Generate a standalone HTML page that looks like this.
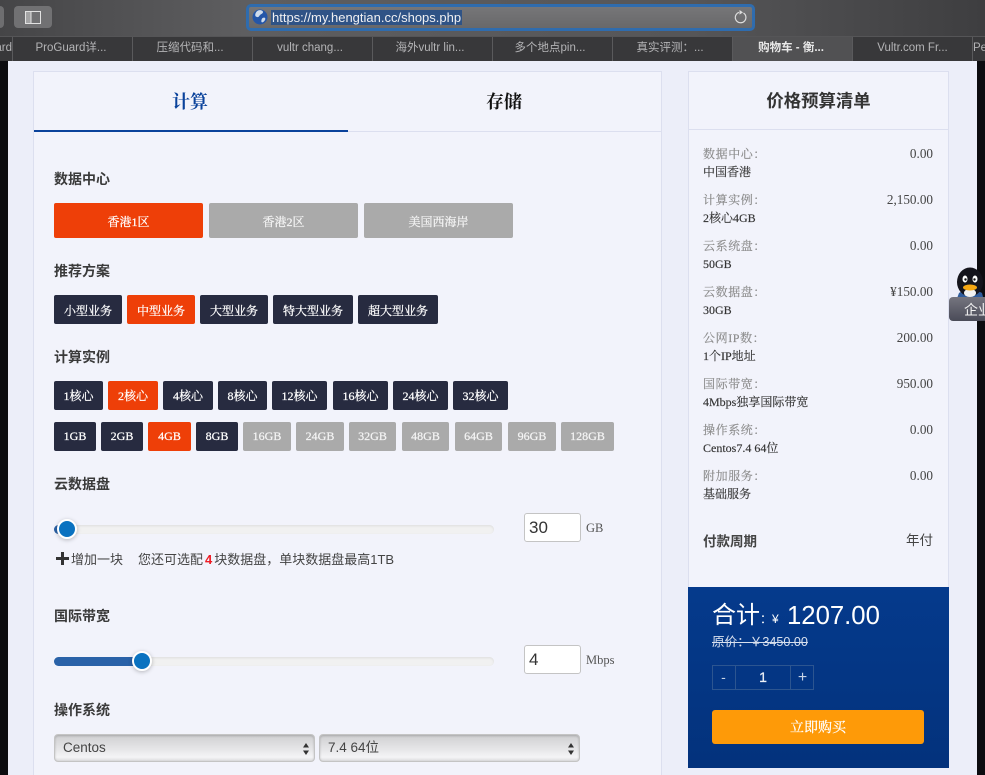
<!DOCTYPE html>
<html><head><meta charset="utf-8">
<style>
*{box-sizing:border-box}
html,body{margin:0;padding:0;width:985px;height:775px;overflow:hidden;background:#0c0c10}
#w{position:relative;width:985px;height:775px;overflow:hidden;background:#0c0c10;font-family:"Liberation Serif","Noto Serif CJK SC",serif;color:#333}
.a{position:absolute;white-space:nowrap}
.b{position:absolute;color:#fff;text-align:center;border-radius:2px;font-size:12px;-webkit-text-stroke:.25px currentColor;font-family:"Liberation Serif","Noto Serif CJK SC",serif}
.d{background:#272b40}.o{background:#ee3f08}.g{background:#aaaaaa;color:#f4f4f4}
.h{position:absolute;left:54px;font:bold 14px/20px "Liberation Sans","Noto Sans CJK SC",sans-serif;color:#3a3a3a}
.tab{position:absolute;top:37px;height:24px;width:120px;border-left:1px solid #5a5a5c;color:#b4b4b6;font:11.5px/23px "Liberation Sans","Noto Sans CJK SC",sans-serif;text-align:center;overflow:hidden;white-space:nowrap;padding-right:5px}
.l{position:absolute;left:703px;font-size:12px;line-height:16px;color:#8a8a8a;letter-spacing:.6px;-webkit-text-stroke:.15px currentColor}
.v{position:absolute;left:703px;font-size:12px;line-height:16px;color:#333;-webkit-text-stroke:.15px currentColor}
.r{position:absolute;right:52px;font-size:13.2px;line-height:16px;color:#444}
.track{position:absolute;left:54px;width:440px;height:9px;border-radius:5px;background:#f1f1f1;box-shadow:inset 0 1px 2px #ddd}
.knob{position:absolute;width:20px;height:20px;border-radius:50%;background:#0a72c0;border:2px solid #fff;box-shadow:0 1px 4px rgba(0,0,0,.25)}
.inp{position:absolute;left:524px;width:57px;height:29px;background:#fff;border:1px solid #c4c4c4;border-radius:3px;font:17px/27px "Liberation Sans",sans-serif;padding-left:4px;color:#333}
.sel{position:absolute;top:734px;height:28px;border:1px solid #c4c4c4;border-radius:4px;background:linear-gradient(#cfcfd1,#e6e6e8 55%,#f4f4f6 85%,#dcdcde);box-shadow:inset 0 1px 2px rgba(0,0,0,.2);font:13.5px/26px "Liberation Sans","Noto Sans CJK SC",sans-serif;color:#444;padding-left:8px}
.sel svg{position:absolute;right:4px;top:7px}
</style></head>
<body>
<div id="w">
<!-- toolbar -->
<div class="a" style="left:0;top:0;width:985px;height:36px;background:linear-gradient(90deg,#454547,#5e5e60 25%,#565658 70%,#3e3e40)"></div>
<div class="a" style="left:-20px;top:6px;width:24px;height:22px;background:#6e6e70;border-radius:4px"></div>
<div class="a" style="left:14px;top:6px;width:38px;height:22px;background:#717173;border-radius:4px"></div>
<svg class="a" style="left:25px;top:11px" width="16" height="13"><rect x=".5" y=".5" width="15" height="12" fill="none" stroke="#e2e2e2"/><line x1="6" y1="1" x2="6" y2="12" stroke="#e2e2e2"/><rect x="1" y="1" width="5" height="11" fill="#e2e2e2" opacity=".45"/></svg>
<div class="a" style="left:246px;top:4px;width:509px;height:27px;background:linear-gradient(#767678,#68686a);border:3px solid #2f6cae;border-radius:5px"></div>
<svg class="a" style="left:252px;top:9px" width="16" height="16"><circle cx="8" cy="8" r="7.5" fill="#2456a8"/><path d="M6 1.500c2-1 5 0 5 1.500s-2 2-3 3-1 2.500-3 2-2-2-1.500-3.500S5 2 6 1.500zM10.500 9c2-1 3.500 0 2.500 2s-3 3-3.500 2 0-3 1-4z" fill="#cfdcec"/></svg>
<div class="a" style="left:271px;top:10px;width:191px;height:15px;background:#2f5386"></div>
<div class="a" style="left:272px;top:9px;font:13px/17px 'Liberation Sans',sans-serif;color:#f0f0f2">https://my.hengtian.cc/shops.php</div>
<svg class="a" style="left:733px;top:9px" width="15" height="16"><path d="M10.5 4A5.3 5.3 0 1 1 6 3.400" fill="none" stroke="#dedede" stroke-width="1.200"/><path d="M6.500 1l3.500 2.400-3.500 2.200z" fill="#dedede"/></svg>
<!-- tabs -->
<div class="a" style="left:0;top:36px;width:985px;height:25px;background:#38383a;border-top:1px solid #555557"></div>
<div class="tab" style="left:-108px;text-align:right;padding-right:0">ard</div>
<div class="tab" style="left:12px;padding-right:3px">ProGuard详...</div>
<div class="tab" style="left:132px">压缩代码和...</div>
<div class="tab" style="left:252px">vultr chang...</div>
<div class="tab" style="left:372px">海外vultr lin...</div>
<div class="tab" style="left:492px">多个地点pin...</div>
<div class="tab" style="left:612px">真实评测：...</div>
<div class="tab" style="left:732px;background:#515153;color:#e8e8e8;font-weight:bold;padding-right:3px">购物车 - 衡...</div>
<div class="tab" style="left:852px;padding-right:0">Vultr.com Fr...</div>
<div class="tab" style="left:972px;text-align:left;padding-right:0">Per</div>
<!-- page -->
<div class="a" style="left:8px;top:61px;width:969px;height:714px;background:#eceef9"></div>
<!-- left panel -->
<div class="a" style="left:33px;top:71px;width:629px;height:704px;background:#f2f3fb;border:1px solid #dcdfef;border-bottom:0"></div>
<div class="a" style="left:34px;top:131px;width:627px;height:1px;background:#dcdfef"></div>
<div class="a" style="left:34px;top:130px;width:314px;height:2px;background:#0a429b"></div>
<div class="a" style="left:172px;top:90px;font-size:18px;line-height:24px;color:#0a429b;font-weight:700">计算</div>
<div class="a" style="left:486px;top:90px;font-size:18px;line-height:24px;color:#111;font-weight:700">存储</div>

<div class="h" style="top:169px">数据中心</div>
<div class="b o" style="left:54px;top:203px;width:149px;height:35px;line-height:39px">香港1区</div>
<div class="b g" style="left:209px;top:203px;width:149px;height:35px;line-height:39px">香港2区</div>
<div class="b g" style="left:364px;top:203px;width:149px;height:35px;line-height:39px">美国西海岸</div>

<div class="h" style="top:261px">推荐方案</div>
<div class="b d" style="left:54px;top:295px;width:68px;height:29px;line-height:33px">小型业务</div>
<div class="b o" style="left:127px;top:295px;width:68px;height:29px;line-height:33px">中型业务</div>
<div class="b d" style="left:200px;top:295px;width:68px;height:29px;line-height:33px">大型业务</div>
<div class="b d" style="left:273px;top:295px;width:80px;height:29px;line-height:33px">特大型业务</div>
<div class="b d" style="left:358px;top:295px;width:80px;height:29px;line-height:33px">超大型业务</div>

<div class="h" style="top:347px">计算实例</div>
<div class="b d" style="left:54px;top:381px;width:49px;height:29px;line-height:31px">1核心</div>
<div class="b o" style="left:108px;top:381px;width:50px;height:29px;line-height:31px">2核心</div>
<div class="b d" style="left:163px;top:381px;width:50px;height:29px;line-height:31px">4核心</div>
<div class="b d" style="left:218px;top:381px;width:49px;height:29px;line-height:31px">8核心</div>
<div class="b d" style="left:272px;top:381px;width:55px;height:29px;line-height:31px">12核心</div>
<div class="b d" style="left:333px;top:381px;width:55px;height:29px;line-height:31px">16核心</div>
<div class="b d" style="left:393px;top:381px;width:55px;height:29px;line-height:31px">24核心</div>
<div class="b d" style="left:453px;top:381px;width:55px;height:29px;line-height:31px">32核心</div>

<div class="b d" style="left:54px;top:422px;width:42px;height:29px;line-height:29px">1GB</div>
<div class="b d" style="left:101px;top:422px;width:42px;height:29px;line-height:29px">2GB</div>
<div class="b o" style="left:148px;top:422px;width:43px;height:29px;line-height:29px">4GB</div>
<div class="b d" style="left:196px;top:422px;width:42px;height:29px;line-height:29px">8GB</div>
<div class="b g" style="left:243px;top:422px;width:48px;height:29px;line-height:29px">16GB</div>
<div class="b g" style="left:296px;top:422px;width:48px;height:29px;line-height:29px">24GB</div>
<div class="b g" style="left:349px;top:422px;width:47px;height:29px;line-height:29px">32GB</div>
<div class="b g" style="left:402px;top:422px;width:47px;height:29px;line-height:29px">48GB</div>
<div class="b g" style="left:455px;top:422px;width:47px;height:29px;line-height:29px">64GB</div>
<div class="b g" style="left:508px;top:422px;width:48px;height:29px;line-height:29px">96GB</div>
<div class="b g" style="left:561px;top:422px;width:53px;height:29px;line-height:29px">128GB</div>

<div class="h" style="top:474px">云数据盘</div>
<div class="track" style="top:525px"></div>
<div class="a" style="left:54px;top:525px;width:12px;height:9px;background:#2a62a8;border-radius:5px 0 0 5px"></div>
<div class="knob" style="left:57px;top:519px"></div>
<div class="inp" style="top:513px">30</div>
<div class="a" style="left:586px;top:520px;font-size:12.500px;line-height:16px;color:#555">GB</div>
<svg class="a" style="left:56px;top:552px" width="13" height="13"><path d="M5 0h3v5h5v3H8v5H5V8H0V5h5z" fill="#333"/></svg>
<div class="a" style="left:71px;top:551px;font:13px/18px 'Liberation Sans','Noto Sans CJK SC',sans-serif;color:#444">增加一块</div>
<div class="a" style="left:138px;top:551px;font:13px/18px 'Liberation Sans','Noto Sans CJK SC',sans-serif;color:#444">您还可选配<span style="color:#ee1c25;font-weight:bold;margin:0 2px">4</span>块数据盘，单块数据盘最高1TB</div>

<div class="h" style="top:606px">国际带宽</div>
<div class="track" style="top:657px"></div>
<div class="a" style="left:54px;top:657px;width:88px;height:9px;background:#2a62a8;border-radius:5px 0 0 5px"></div>
<div class="knob" style="left:132px;top:651px"></div>
<div class="inp" style="top:645px">4</div>
<div class="a" style="left:586px;top:652px;font-size:12.500px;line-height:16px;color:#555">Mbps</div>

<div class="h" style="top:700px">操作系统</div>
<div class="sel" style="left:54px;width:261px">Centos<svg width="8" height="14"><path d="M4 1l3 4.500H1zM4 13L1 8.500h6z" fill="#333"/></svg></div>
<div class="sel" style="left:319px;width:261px">7.4 64位<svg width="8" height="14"><path d="M4 1l3 4.500H1zM4 13L1 8.500h6z" fill="#333"/></svg></div>

<!-- right panel -->
<div class="a" style="left:688px;top:71px;width:261px;height:697px;background:#f2f3fb;border:1px solid #dcdfef"></div>
<div class="a" style="left:689px;top:129px;width:259px;height:1px;background:#dcdfef"></div>
<div class="a" style="left:688px;top:90px;width:261px;text-align:center;font:bold 17.400px/22px 'Liberation Sans','Noto Sans CJK SC',sans-serif;color:#333">价格预算清单</div>

<div class="l" style="top:146px">数据中心：</div><div class="r" style="top:146px">0.00</div><div class="v" style="top:164px">中国香港</div>
<div class="l" style="top:192px">计算实例：</div><div class="r" style="top:192px">2,150.00</div><div class="v" style="top:210px">2核心4GB</div>
<div class="l" style="top:238px">云系统盘：</div><div class="r" style="top:238px">0.00</div><div class="v" style="top:256px">50GB</div>
<div class="l" style="top:284px">云数据盘：</div><div class="r" style="top:284px">¥150.00</div><div class="v" style="top:302px">30GB</div>
<div class="l" style="top:330px">公网IP数：</div><div class="r" style="top:330px">200.00</div><div class="v" style="top:348px">1个IP地址</div>
<div class="l" style="top:376px">国际带宽：</div><div class="r" style="top:376px">950.00</div><div class="v" style="top:394px">4Mbps独享国际带宽</div>
<div class="l" style="top:422px">操作系统：</div><div class="r" style="top:422px">0.00</div><div class="v" style="top:440px">Centos7.4 64位</div>
<div class="l" style="top:468px">附加服务：</div><div class="r" style="top:468px">0.00</div><div class="v" style="top:486px">基础服务</div>

<div class="a" style="left:703px;top:533px;font:bold 13.500px/18px 'Liberation Sans','Noto Sans CJK SC',sans-serif;color:#444">付款周期</div>
<div class="a" style="right:52px;top:532px;font:13.500px/18px 'Liberation Sans','Noto Sans CJK SC',sans-serif;color:#444">年付</div>

<!-- total -->
<div class="a" style="left:688px;top:587px;width:261px;height:181px;background:linear-gradient(#053a8c,#03327c)"></div>
<div class="a" style="left:712px;top:600px;color:#fff;font:24px/32px 'Liberation Sans','Noto Sans CJK SC',sans-serif">合计<span style="font-size:12px">：¥</span></div>
<div class="a" style="left:787px;top:600px;color:#fff;font:25.700px/32px 'Liberation Sans',sans-serif">1207.00</div>
<div class="a" style="left:712px;top:634px;color:#d8e0ee;font:12.600px/17px 'Liberation Sans','Noto Sans CJK SC',sans-serif;text-decoration:line-through">原价：￥3450.00</div>
<div class="a" style="left:712px;top:665px;width:102px;height:25px;border:1px solid #2c5590;color:#eef2f8;font:14px/23px 'Liberation Sans',sans-serif;text-align:center;-webkit-text-stroke:.3px #eef2f8">1</div>
<div class="a" style="left:735px;top:665px;width:1px;height:25px;background:#2c5590"></div>
<div class="a" style="left:790px;top:665px;width:1px;height:25px;background:#2c5590"></div>
<div class="a" style="left:712px;top:665px;width:23px;text-align:center;color:#c8d4e6;font:14px/25px 'Liberation Sans',sans-serif">-</div>
<div class="a" style="left:791px;top:665px;width:23px;text-align:center;color:#c8d4e6;font:16px/25px 'Liberation Sans',sans-serif">+</div>
<div class="a" style="left:712px;top:710px;width:212px;height:34px;background:#fe9a08;border-radius:3px;color:#fff;text-align:center;font-size:14px;line-height:37px;-webkit-text-stroke:.25px #fff">立即购买</div>

<!-- qq -->
<svg class="a" style="left:952px;top:267px" width="33" height="34"><path d="M7 26c3-3 19-3 23 0l2 8H4z" fill="#2f5c9c"/><ellipse cx="18" cy="15" rx="13" ry="14.500" fill="#14141c"/><ellipse cx="18" cy="26" rx="6" ry="4" fill="#f2f2f2"/><ellipse cx="13" cy="12" rx="2.500" ry="3.500" fill="#fff"/><ellipse cx="23" cy="12" rx="2.500" ry="3.500" fill="#fff"/><circle cx="13.500" cy="12.500" r="1.200" fill="#111"/><circle cx="22.500" cy="12.500" r="1.200" fill="#111"/><ellipse cx="18" cy="20.500" rx="7" ry="3" fill="#f5a712"/></svg>
<div class="a" style="left:949px;top:297px;width:40px;height:24px;background:linear-gradient(#75757f,#4a4b58);border-radius:4px 0 0 4px;color:#f2f2f2;font:14px/26px 'Liberation Sans','Noto Sans CJK SC',sans-serif;padding-left:15px;overflow:hidden">企业</div>
</div>
</body></html>
